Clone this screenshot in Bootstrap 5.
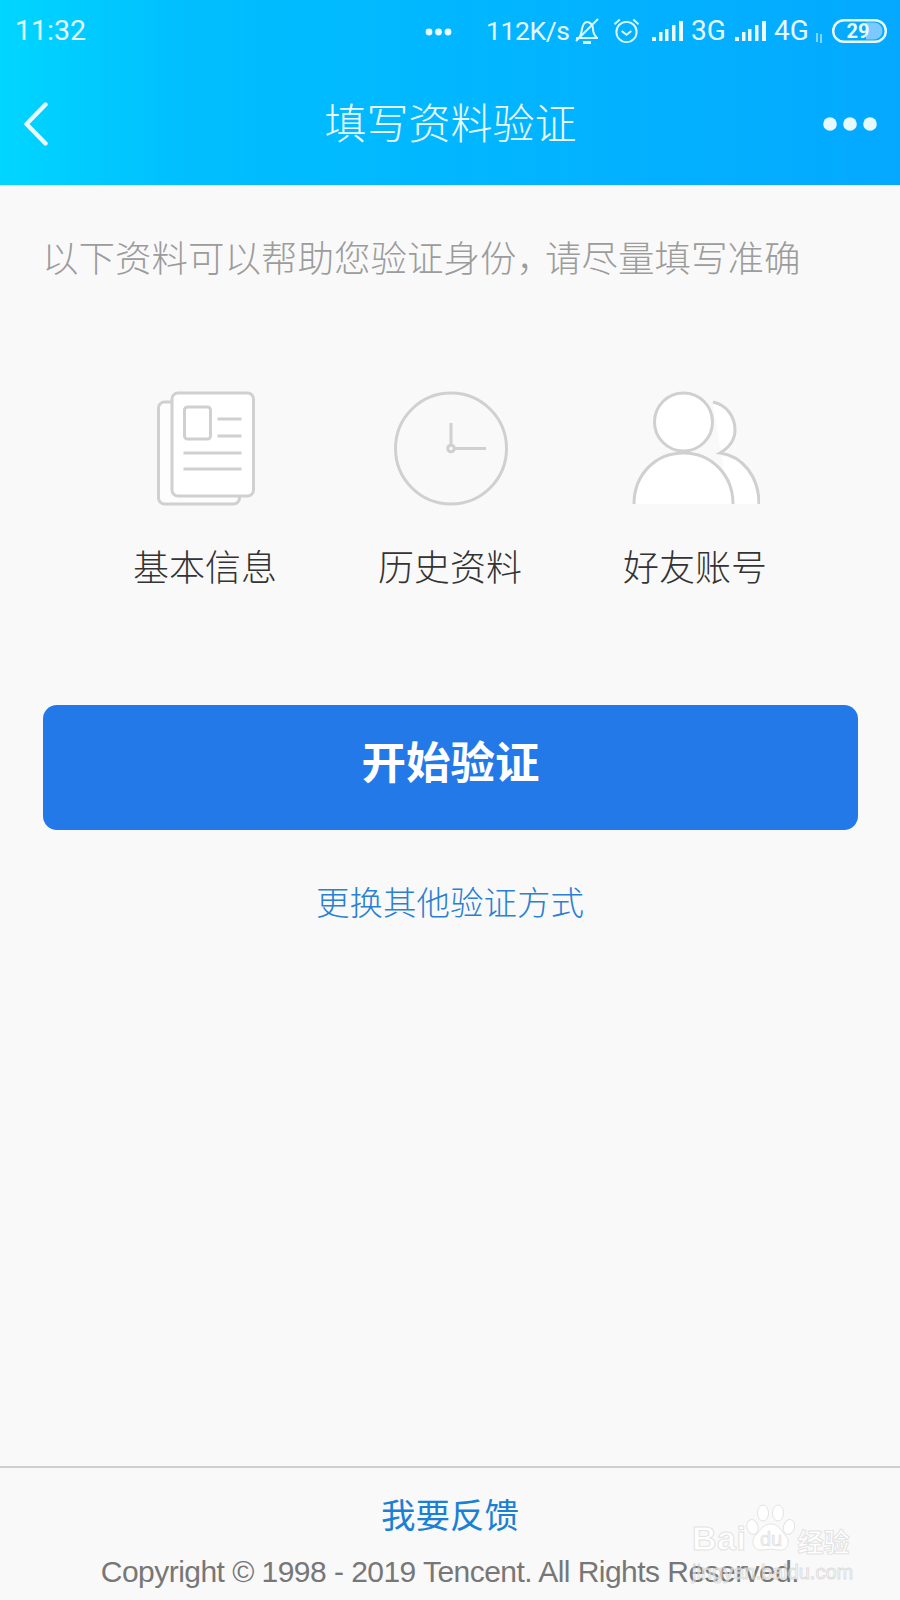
<!DOCTYPE html>
<html lang="zh">
<head>
<meta charset="utf-8">
<title>填写资料验证</title>
<link href="https://cdn.jsdelivr.net/npm/bootstrap@5.3.0/dist/css/bootstrap.min.css" rel="stylesheet">
<style>
html,body{margin:0;height:1600px;overflow:hidden}
body{width:900px;background:#f9f9f9;font-family:"Noto Sans CJK SC","Liberation Sans",sans-serif;position:relative}
.shell{height:1600px}
.topbar{height:185px;background:linear-gradient(90deg,#00d6ff 0%,#00bfff 20%,#04a9ff 100%);color:#e6f9ff}
.statusline{height:62px;padding:0 13px 0 15px;font-family:Roboto,"Liberation Sans",sans-serif;font-size:28px;line-height:1}
.clocktime{font-size:28.5px;margin-right:339px}
.tinydots{width:27px;margin-right:34px}
.speed{margin-right:7px;width:81px;font-size:26.500px;letter-spacing:-.4px}
.bellmark{margin-right:13px}
.alarmmark{margin-right:12px}
.barsmark{margin-right:7px}
.netmark{width:37px;margin-right:7px}
.arrowmark{margin-top:14px}
.navline{height:123px;padding:0 23px 0 24px}
.navside{width:54px}
.navtitle{font-size:42px;font-weight:300;line-height:1;color:#eafaff;margin-top:-5px}
.hint{font-size:36.5px;line-height:44px;color:#9c9c9c;padding:50px 0 0 42px;height:95px;white-space:nowrap;font-weight:300}
.hint span{letter-spacing:-16px}
.features{margin-top:110px;height:315px}
.featurecol{width:245px}
.featurecol svg{display:block;margin:0 auto}
.featurelabel{font-size:36px;line-height:44px;color:#333;margin-top:35px;font-weight:300}
.mainbtn{display:block;width:815px;height:125px;margin:0 0 0 43px;padding:0 0 14px;background:#2479e8;border:0;border-radius:14px;color:#fff;font-size:44.500px;font-weight:700;line-height:1}
.switchlink{display:block;text-align:center;font-size:33.5px;line-height:44px;color:#2a80d2;margin-top:49px;text-decoration:none;font-weight:300}
.pagefoot{position:absolute;left:0;right:0;bottom:0;height:134px;border-top:2px solid #cfcfcf;text-align:center}
.feedback{display:block;font-size:34.5px;line-height:44px;color:#1a80d6;text-decoration:none;margin-top:23px;font-weight:400}
.copyline{font-family:"Liberation Sans",sans-serif;font-size:30px;line-height:36px;color:#777;margin-top:19px;white-space:nowrap;letter-spacing:-.54px}
.watermark{position:absolute;left:692px;top:1504px;width:162px;color:#fff;font-family:"Liberation Sans",sans-serif;line-height:1;-webkit-text-stroke:1px #e3e3e3}
.wmrow{height:50px}
.wmbai{font-size:34px;font-weight:700;letter-spacing:.5px;line-height:34px;margin-bottom:-1px}
.wmcn{font-family:"Noto Sans CJK SC",sans-serif;font-size:26px;line-height:28px;font-weight:700;margin-bottom:-1px}
.wmpaw{margin:0 1px 0 0}
.wmsmall{font-size:20px;white-space:nowrap;margin-top:8px;color:rgba(255,255,255,.35);-webkit-text-stroke:1px rgba(215,215,215,.8)}
</style>
</head>
<body>
<div class="shell d-flex flex-column">
  <header class="topbar flex-shrink-0">
    <div class="statusline d-flex align-items-center">
      <span class="clocktime">11:32</span>
      <svg class="tinydots" height="10" viewBox="0 0 27 10" fill="#eafaff"><circle cx="4" cy="6" r="3.4"/><circle cx="13.5" cy="6" r="3.4"/><circle cx="23" cy="6" r="3.4"/></svg>
      <span class="speed">112K/s</span>
      <svg class="bellmark" width="26" height="28" viewBox="0 0 26 28" fill="none" stroke="#dff6ff" stroke-width="2"><path d="M2 21h22M5 21c2-2 2-4 3-9 1-5 3-7 5-7 3 0 6 3 6 7 0 5 2 7 4 9"/><path d="M2 24 24 2"/><path d="M9 25.500h8" stroke-width="3"/></svg>
      <svg class="alarmmark" width="27" height="28" viewBox="0 0 28 28" fill="none" stroke="#dff6ff" stroke-width="2"><circle cx="14" cy="15" r="10.500"/><path d="M9 14l5 4 5-4"/><path d="M1.500 7 7 2M26.500 7 21 2"/></svg>
      <svg class="barsmark" width="32" height="22" viewBox="0 0 32 22" fill="#eafaff"><rect x="0" y="17" width="4" height="4"/><rect x="7" y="12" width="3.500" height="9"/><rect x="13" y="9" width="3.500" height="12"/><rect x="20" y="5" width="3.500" height="16"/><rect x="27" y="1" width="4" height="20"/></svg>
      <span class="netmark">3G</span>
      <svg class="barsmark" width="32" height="22" viewBox="0 0 32 22" fill="#eafaff"><rect x="0" y="17" width="4" height="4"/><rect x="7" y="12" width="3.500" height="9"/><rect x="13" y="9" width="3.500" height="12"/><rect x="20" y="5" width="3.500" height="16"/><rect x="27" y="1" width="4" height="20"/></svg>
      <span class="netmark me-1">4G</span>
      <svg class="arrowmark" width="8" height="10" viewBox="0 0 8 10" stroke="#bfeeff" stroke-width="1.300"><path d="M2 0v9M6 1v9"/></svg>
      <svg width="55" height="24" viewBox="0 0 55 24" class="ms-auto"><rect x="1.200" y="1.200" width="52.600" height="21.600" rx="10.800" fill="none" stroke="#eafaff" stroke-width="2.400"/><path d="M34 3.500h8a8.500 8.500 0 0 1 0 17h-8z" fill="#7cc9ff"/><text x="26" y="19" text-anchor="middle" font-family="Roboto,sans-serif" font-weight="700" font-size="20" fill="#eafaff">29</text></svg>
    </div>
    <nav class="navline d-flex align-items-center justify-content-between">
      <div class="navside"><svg class="d-block" width="24" height="44" viewBox="0 0 24 44" fill="none" stroke="#eafaff" stroke-width="4.400" stroke-linecap="round" stroke-linejoin="round"><path d="M21.500 2.500 2.500 22l19 19.500"/></svg></div>
      <div class="navtitle">填写资料验证</div>
      <div class="navside"><svg class="d-block" width="54" height="14" viewBox="0 0 54 14" fill="#e6f9ff"><circle cx="7" cy="7" r="6.800"/><circle cx="27" cy="7" r="6.800"/><circle cx="47" cy="7" r="6.800"/></svg></div>
    </nav>
  </header>
  <main>
    <div class="hint">以下资料可以帮助您验证身份<span>，</span>&nbsp;请尽量填写准确</div>
    <div class="features d-flex justify-content-center">
      <div class="featurecol text-center">
        <svg width="130" height="118" viewBox="140.500 390 130 118" fill="none" stroke="#d0d0d0" stroke-width="3">
          <rect x="159" y="402" width="81" height="102" rx="6" fill="#fdfdfd"/>
          <rect x="172.500" y="393" width="81.500" height="103" rx="6" fill="#fff"/>
          <rect x="185" y="407" width="26" height="32" rx="3"/>
          <path d="M218 419h24M218 436h24M184 453h58M184 469h58"/>
        </svg>
        <div class="featurelabel">基本信息</div>
      </div>
      <div class="featurecol text-center">
        <svg width="130" height="118" viewBox="385 390 130 118" fill="none" stroke="#d0d0d0" stroke-width="3">
          <circle cx="451" cy="448.500" r="55.500"/>
          <path d="M451 423v22M454.500 448.500H486"/>
          <circle cx="451" cy="448.500" r="3.300"/>
        </svg>
        <div class="featurelabel">历史资料</div>
      </div>
      <div class="featurecol text-center">
        <svg width="130" height="118" viewBox="630 390 130 118" fill="none" stroke="#d0d0d0" stroke-width="3">
          <path d="M713 402c14 3 22 15 22 28 0 9-5 17-14 23l0 3c22 3 38 24 38 48h-30z" fill="#fff" stroke="none"/>
          <path d="M713 402c14 3 22 15 22 28 0 9-5 17-15 23 23 3 39 24 39 51"/>
          <path d="M634 504c0-29 21-51 49.500-51 28 0 49.500 22 49.500 51" fill="#fff"/>
          <ellipse cx="683.500" cy="422" rx="29" ry="29" fill="#fff"/>
        </svg>
        <div class="featurelabel">好友账号</div>
      </div>
    </div>
    <button type="button" class="btn mainbtn">开始验证</button>
    <a href="#" class="switchlink">更换其他验证方式</a>
  </main>
  <footer class="pagefoot">
    <a href="#" class="feedback">我要反馈</a>
    <div class="copyline">Copyright © 1998 - 2019 Tencent. All Rights Reserved.</div>
  </footer>
</div>
<div class="watermark">
  <div class="wmrow d-flex align-items-end">
    <span class="wmbai">Bai</span>
    <svg class="wmpaw" width="50" height="50" viewBox="0 0 50 50" fill="#fff" stroke="#e3e3e3" stroke-width="1"><ellipse cx="6.500" cy="23" rx="5.500" ry="7.500" transform="rotate(-15 6.500 23)"/><ellipse cx="17" cy="9" rx="5.500" ry="8"/><ellipse cx="32" cy="9" rx="5.500" ry="8"/><ellipse cx="43" cy="23" rx="5.500" ry="7.500" transform="rotate(15 43 23)"/><path d="M25 20c8 0 10 7 15 12 5 6 1 16-8 14-5-1-10-1-15 0-9 2-13-8-8-14 5-5 8-12 16-12z"/><text x="25" y="42" text-anchor="middle" font-family="Liberation Sans,sans-serif" font-size="20" fill="#f4f4f4" stroke="#dedede" stroke-width=".7">du</text></svg>
    <span class="wmcn">经验</span>
  </div>
  <div class="wmsmall">jingyan.baidu.com</div>
</div>
</body>
</html>
